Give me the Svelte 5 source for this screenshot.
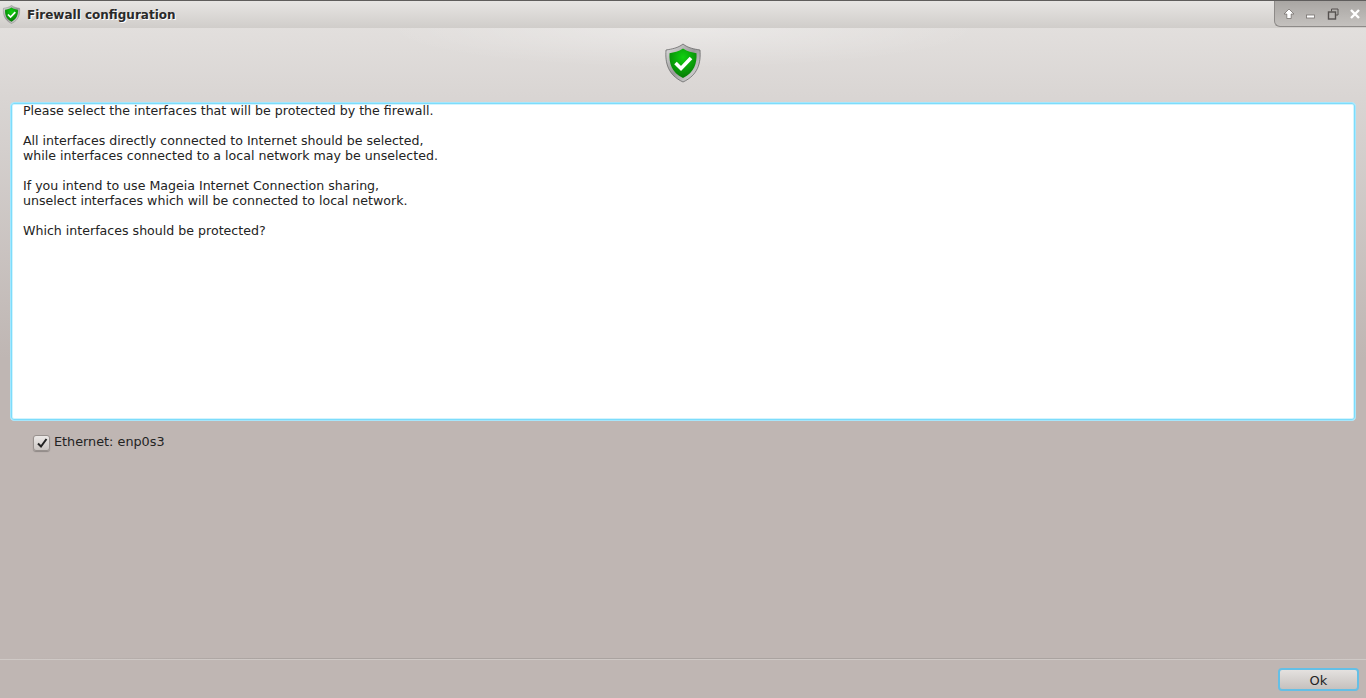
<script>
  const lines = [
    "Please select the interfaces that will be protected by the firewall.",
    "",
    "All interfaces directly connected to Internet should be selected,",
    "while interfaces connected to a local network may be unselected.",
    "",
    "If you intend to use Mageia Internet Connection sharing,",
    "unselect interfaces which will be connected to local network.",
    "",
    "Which interfaces should be protected?"
  ];
</script>

{#snippet shield(size)}
  <svg width={size} height={size} viewBox="0 0 36 40">
    <defs>
      <linearGradient id="rim-{size}" x1="0" y1="0" x2="1" y2="1">
        <stop offset="0" stop-color="#e2e2e2" />
        <stop offset="0.5" stop-color="#9a9a9a" />
        <stop offset="1" stop-color="#ececec" />
      </linearGradient>
      <radialGradient id="green-{size}" cx="0.5" cy="0.3" r="0.75">
        <stop offset="0" stop-color="#10d010" />
        <stop offset="1" stop-color="#047404" />
      </radialGradient>
    </defs>
    <path d="M18 1 C23 5 29 6 35 7 C36 20 33 32 18 39 C3 32 0 20 1 7 C7 6 13 5 18 1Z" fill="url(#rim-{size})" stroke="#6a6a6a" stroke-width="0.8" />
    <path d="M18 5.5 C22.5 8.5 27 9.5 31.5 10.2 C32 20 29.5 29.5 18 35 C6.5 29.5 4 20 4.5 10.2 C9 9.5 13.5 8.5 18 5.5Z" fill="url(#green-{size})" />
    <path d="M10.5 20 L16 25.5 L26 15" fill="none" stroke="#fff" stroke-width="3.6" />
  </svg>
{/snippet}

<div class="window">
  <header class="titlebar">
    <div class="title-icon">{@render shield(19)}</div>
    <span class="title">Firewall configuration</span>
    <div class="controls">
      <svg width="12" height="12" viewBox="0 0 12 12"><path d="M6 1 L11 6 H8.2 V10.5 H3.8 V6 H1Z" fill="#fff" stroke="#77726f" stroke-width="0.8" /></svg>
      <svg width="12" height="12" viewBox="0 0 12 12"><rect x="1.5" y="7" width="8" height="3" fill="#fff" stroke="#77726f" stroke-width="0.8" /></svg>
      <svg width="12" height="12" viewBox="0 0 12 12"><path d="M4.5 3.5 V1 H11 V7 H8.5" fill="none" stroke="#55514f" stroke-width="1" /><rect x="1.5" y="4" width="7" height="7" fill="none" stroke="#55514f" stroke-width="1.4" /></svg>
      <svg width="12" height="12" viewBox="0 0 12 12"><path d="M2 2 L10 10 M10 2 L2 10" stroke="#fff" stroke-width="2.4" /></svg>
    </div>
  </header>

  <main class="content">
    <div class="banner">{@render shield(40)}</div>

    <div class="textbox">
      {#each lines as line}
        <div class="line">{line}</div>
      {/each}
    </div>

    <label class="check">
      <span class="box">
        <svg width="14" height="14" viewBox="0 0 14 14"><path d="M3 7.5 L6 10.5 L11.5 3" fill="none" stroke="#222" stroke-width="2" /></svg>
      </span>
      <span class="check-label">Ethernet: enp0s3</span>
    </label>

    <div class="spacer"></div>
    <div class="separator"></div>
    <div class="actions">
      <button class="ok">Ok</button>
    </div>
  </main>
</div>

<style>
  :global(body) {
    margin: 0;
    overflow: hidden;
  }
  .window {
    width: 1366px;
    height: 698px;
    display: flex;
    flex-direction: column;
    font-family: "DejaVu Sans", sans-serif;
    font-size: 12.6px;
    color: #232323;
    background: #bfb6b3;
  }

  /* titlebar */
  .titlebar {
    height: 28px;
    flex: none;
    box-sizing: border-box;
    border-top: 1px solid #5f5d5c;
    display: flex;
    align-items: center;
    position: relative;
    background: linear-gradient(#e7e5e3, #d0cdca);
  }
  .title-icon {
    display: flex;
    margin-left: 2px;
  }
  .title {
    margin-left: 6px;
    font-weight: bold;
    font-size: 12px;
    color: #2a2a2a;
    text-shadow: 1px 1px 0 #fff;
  }
  .controls {
    position: absolute;
    right: 0;
    top: 0;
    height: 26px;
    width: 92px;
    box-sizing: border-box;
    padding: 0 5px 0 8px;
    display: flex;
    align-items: center;
    justify-content: space-between;
    background: linear-gradient(#a9a6a3, #c4c1be);
    border-left: 1px solid #8d8a88;
    border-bottom: 1px solid #8d8a88;
    border-bottom-left-radius: 6px;
  }

  /* content */
  .content {
    flex: 1;
    display: flex;
    flex-direction: column;
    min-height: 0;
    background:
      radial-gradient(ellipse 300px 40px at 683px 0, rgba(255, 255, 255, 0.3), rgba(255, 255, 255, 0)),
      linear-gradient(#e2dfdd 0, #d9d5d3 70px, #bfb6b3 330px);
  }
  .banner {
    height: 74px;
    flex: none;
    display: flex;
    justify-content: center;
    padding-top: 15px;
    box-sizing: border-box;
  }
  .textbox {
    height: 319px;
    flex: none;
    margin: 0 10px;
    box-sizing: border-box;
    border: 1px solid #a5e6fc;
    border-radius: 4px;
    box-shadow: inset 0 0 0 1px #7ddcfb, inset 0 0 0 2px #d2f4fe;
    background: #fff;
    padding: 0 12px;
    overflow: hidden;
  }
  .line {
    height: 15px;
    line-height: 15px;
    position: relative;
    top: 0;
    white-space: pre;
    color: #232323;
  }
  .check {
    display: flex;
    align-items: center;
    gap: 4px;
    margin: 12px 0 0 33px;
    height: 17px;
  }
  .check-label {
    font-size: 12.8px;
  }
  .box {
    width: 17px;
    height: 16px;
    box-sizing: border-box;
    border: 1px solid #98918e;
    border-radius: 3px;
    background: linear-gradient(#ece9e7, #cbc6c3);
    box-shadow: 0 1px 1px rgba(0, 0, 0, 0.25);
    display: flex;
    align-items: center;
    justify-content: center;
    margin-top: 3px;
  }
  .spacer {
    flex: 1;
  }
  .separator {
    height: 2px;
    flex: none;
    background: linear-gradient(90deg, rgba(170, 163, 160, 0) 1%, #aaa3a0 20%, #aaa3a0 80%, rgba(170, 163, 160, 0) 99%);
    border-bottom: 1px solid #cfc9c6;
    box-sizing: border-box;
  }
  .actions {
    flex: none;
    height: 38px;
    display: flex;
    justify-content: flex-end;
    padding: 8px 7px 0 0;
    box-sizing: border-box;
  }
  .ok {
    width: 81px;
    height: 23px;
    box-sizing: border-box;
    padding: 2px 0 0;
    border: 2px solid #64bfe6;
    border-radius: 4px;
    background: linear-gradient(#e4e1df, #c6c1be);
    font-family: inherit;
    font-size: 13px;
    color: #232323;
  }
</style>
